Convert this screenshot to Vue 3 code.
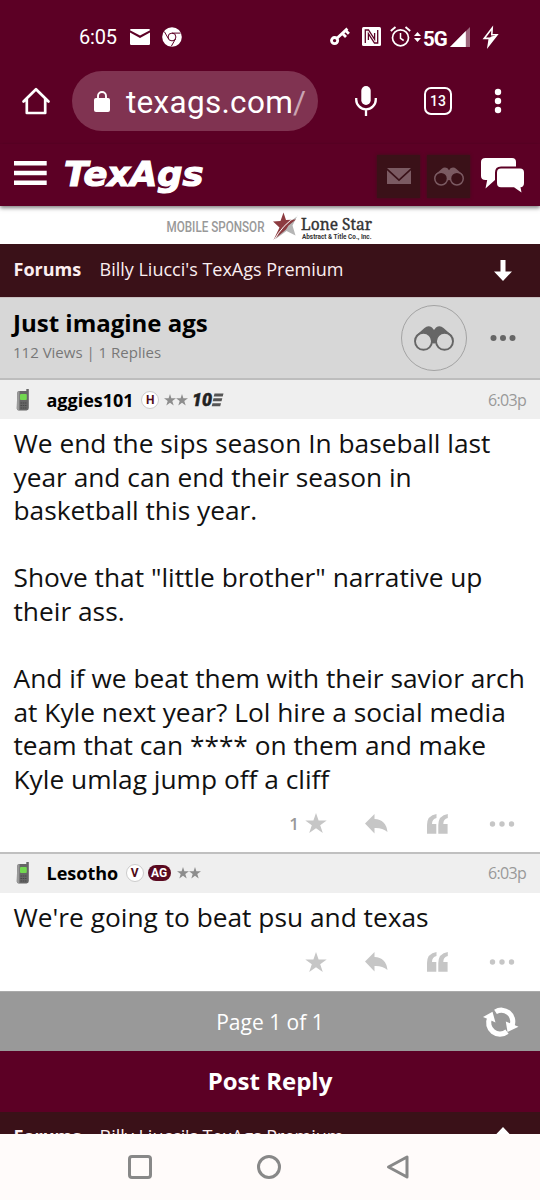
<script setup>
const posts = [
  {
    user: 'aggies101',
    badge: 'H',
    ag: false,
    ten: true,
    time: '6:03p',
    likes: '1',
    lines: [
      'We end the sips season In baseball last',
      'year and can end their season in',
      'basketball this year.',
      '',
      'Shove that "little brother" narrative up',
      'their ass.',
      '',
      'And if we beat them with their savior arch',
      'at Kyle next year? Lol hire a social media',
      'team that can **** on them and make',
      'Kyle umlag jump off a cliff',
    ],
  },
  {
    user: 'Lesotho',
    badge: 'V',
    ag: true,
    ten: false,
    time: '6:03p',
    likes: '',
    lines: ["We're going to beat psu and texas"],
  },
]
</script>

<template>
  <div class="screen">
    <div class="status">
      <span class="clock">6:05</span>
      <svg class="s-mail" viewBox="0 0 20 16" width="20" height="16"><path d="M0 1.200Q0 0 1.200 0H18.800Q20 0 20 1.200L10 6.500 0 1.200ZM0 3.600 10 9 20 3.600V14.800Q20 16 18.800 16H1.200Q0 16 0 14.800Z" fill="#fff"/></svg>
      <svg class="s-chrome" viewBox="0 0 20 20" width="20" height="20"><circle cx="10" cy="10" r="9.800" fill="#fff"/><g fill="none" stroke="#5c0025" stroke-width="1"><circle cx="10" cy="10" r="3.900"/><path d="M10 6.100H18.600M6.600 12 2.400 4.700M13.400 12 9.300 19.300"/></g></svg>
      <span class="grow"></span>
      <svg class="s-key" viewBox="0 0 20 19" width="20" height="19"><g fill="none" stroke="#fff"><circle cx="4.600" cy="13.600" r="3.100" stroke-width="2.800"/><path d="M7 11.200 17.400 1.600M12.300 6.300l3.700 3.700M15.600 3.500l3.300 3.300" stroke-width="2.800"/></g></svg>
      <svg class="s-nfc" viewBox="0 0 19 19" width="19" height="19"><rect width="19" height="19" rx="1.500" fill="#fff"/><path d="M3.300 16V3H6.500L12.600 12.400V6M15.700 3V16H12.500L6.400 6.600V13" fill="none" stroke="#5c0025" stroke-width="1.300"/></svg>
      <svg class="s-alarm" viewBox="0 0 21 21" width="21" height="21"><g fill="none" stroke="#fff"><circle cx="10.500" cy="11.800" r="8" stroke-width="1.700"/><path d="M10.500 7V12.400L13.700 14.500" stroke-width="1.500"/><path d="M.8 5 5.500 1M20.200 5 15.500 1" stroke-width="1.900"/></g></svg>
      <svg class="s-arrows" viewBox="0 0 7 10" width="7" height="10"><path d="M0 4 3.500 0 7 4ZM0 6H7L3.500 10Z" fill="#fff"/></svg>
      <span class="fiveg">5G</span>
      <svg class="s-signal" viewBox="0 0 20 20" width="20" height="20"><path d="M0 20 20 0V20Z" fill="#fff" opacity=".4"/><path d="M0 20 15.800 4V20Z" fill="#fff"/></svg>
      <svg class="s-bolt" viewBox="0 0 15 20" width="15" height="20"><path d="M9.200 1 1.200 11.400H6.400L5.200 19 14 7.800H8.800Z" fill="none" stroke="#fff" stroke-width="1.600"/><path d="M8.300 9.500 14 8 5.200 19 6.500 11Z" fill="#fff"/></svg>
    </div>

    <div class="urlbar">
      <svg class="u-home" viewBox="0 0 28 28" width="28" height="28"><path d="M1.500 14.500 14 2.200 26.500 14.500M4.800 12V26H23.200V12" fill="none" stroke="#fff" stroke-width="2.700" stroke-linejoin="round" stroke-linecap="round"/></svg>
      <div class="pill">
        <svg viewBox="0 0 16 21" width="16" height="21"><rect y="7" width="16" height="14" rx="2" fill="#fff"/><path d="M4 8V5A4 4 0 0 1 12 5V8" fill="none" stroke="#fff" stroke-width="1.900"/></svg>
        <span class="url">texags.com<i>/</i></span>
      </div>
      <svg class="u-mic" viewBox="0 0 22 30" width="22" height="30"><rect x="6.300" width="9.400" height="19" rx="4.700" fill="#fff"/><path d="M1.200 12V13.500A9.800 9.800 0 0 0 20.800 13.500V12M11 23V30" fill="none" stroke="#fff" stroke-width="2.300"/></svg>
      <div class="tabs">13</div>
      <svg class="u-dots" viewBox="0 0 8 26" width="8" height="26"><g fill="#fff"><circle cx="4" cy="4" r="3.200"/><circle cx="4" cy="13" r="3.200"/><circle cx="4" cy="22" r="3.200"/></g></svg>
    </div>

    <header class="site">
      <svg viewBox="0 0 33 24" width="33" height="24"><path d="M0 0H32.700V4.500H0ZM0 9.700H32.700V14.200H0ZM0 19.400H32.700V23.900H0Z" fill="#fff"/></svg>
      <svg class="logo" viewBox="0 0 144 44" width="144" height="44"><text x="-1" y="35" textLength="139.500" lengthAdjust="spacingAndGlyphs">TexAgs</text></svg>
      <span class="grow"></span>
      <div class="tile">
        <svg viewBox="0 0 24 16" width="24" height="16"><path d="M0 0H24L12 11ZM0 2.200 12 13.200 24 2.200V16H0Z" fill="#7b5a62"/></svg>
      </div>
      <div class="tile">
        <svg viewBox="0 0 40 25" width="30" height="19"><path d="M1.500 10 10.500 2Q14-1 18 1.500L20 4 22 1.500Q26-1 29.500 2L38.500 10 30 16 20 17.500 10 16Z" fill="#7b5a62"/><g fill="#3a1118" stroke="#7b5a62" stroke-width="2"><circle cx="9.500" cy="15.300" r="8.500"/><circle cx="30.500" cy="15.300" r="8.500"/></g></svg>
      </div>
      <svg class="chat" viewBox="0 0 43 35" width="43" height="35"><path d="M4.500 0H31Q35 0 35 4V18Q35 22 31 22H14L4.500 30.500 6.200 22H4.500Q0 22 0 18V4Q0 0 4.500 0Z" fill="#fff"/><path d="M20 10.500H39Q43 10.500 43 14.500V25Q43 29 39.500 29.300L40.500 34.500 33 29.300H20Q16 29.300 16 25V14.500Q16 10.500 20 10.500Z" fill="#fff" stroke="#5c0025" stroke-width="4" paint-order="stroke"/></svg>
    </header>

    <div class="sponsor">
      <svg viewBox="0 0 210 34" width="210" height="34">
        <text class="sp" x=".5" y="23" textLength="98" lengthAdjust="spacingAndGlyphs">MOBILE SPONSOR</text>
        <path d="M131.500 6.500 124 12.500 121 17 107.500 31.500 120.500 22 129.500 26.500 126.500 16.500Z" fill="#b5b5b5"/>
        <path d="M117.500 3.500 120 11 130 10.500 122.500 16.500 120 20.500 107.500 31 113.500 18.500 107 12.500 114.500 12Z" fill="#8c3b40"/>
        <path d="M131 7Q117 15 107.500 32" fill="none" stroke="#fff" stroke-width="1"/>
        <text class="ls" x="135" y="20.500" textLength="71" lengthAdjust="spacingAndGlyphs">Lone Star</text>
        <text class="ab" x="136" y="29.500" textLength="69.500" lengthAdjust="spacingAndGlyphs">Abstract &amp; Title Co., Inc.</text>
      </svg>
    </div>

    <nav class="crumb">
      <b>Forums</b><span>Billy Liucci's TexAgs Premium</span>
      <svg viewBox="0 0 18 21" width="18" height="21"><path d="M6.500 0H11.500V11.500H18L9 21 0 11.500H6.500Z" fill="#fff"/></svg>
    </nav>

    <section class="topic">
      <div class="heading">
        <h1>Just imagine ags</h1>
        <p>112 Views | 1 Replies</p>
      </div>
      <div class="ring">
        <svg viewBox="0 0 40 25" width="40" height="25"><path d="M1.500 10 10.500 2Q14-1 18 1.500L20 4 22 1.500Q26-1 29.500 2L38.500 10 30 16 20 17.500 10 16Z" fill="#666"/><g fill="#d7d7d7" stroke="#666" stroke-width="1.900"><circle cx="9.500" cy="15.300" r="8.500"/><circle cx="30.500" cy="15.300" r="8.500"/></g></svg>
      </div>
      <svg class="more" viewBox="0 0 26 8" width="26" height="8"><g fill="#666"><circle cx="3.500" cy="4" r="3"/><circle cx="13" cy="4" r="3"/><circle cx="22.500" cy="4" r="3"/></g></svg>
    </section>

    <article v-for="p in posts" :key="p.user" class="post">
      <div class="meta">
        <svg class="phone" viewBox="0 0 14 22" width="14" height="22"><path d="M10.300 0H12.800V19Q12.800 21 10.500 21.500H3Q.8 21.500 .8 19.500L1.200 4Q1.300 2 3.500 2H10.300Z" fill="#666"/><path d="M.8 19.500 1.200 4Q1.300 2 3.500 2L3.300 21.500Q.8 21.500 .8 19.500Z" fill="#999"/><rect x="4" y="5" width="6.800" height="6" rx="1" fill="#72d850"/><path d="M4.500 14H10.500M4.500 16.500H10.500M4.500 19H10.500" stroke="#484848" stroke-width="1.100" stroke-dasharray="1.500 .7"/></svg>
        <b class="name">{{ p.user }}</b>
        <span class="badge">{{ p.badge }}</span>
        <span v-if="p.ag" class="ag">AG</span>
        <svg class="stars" viewBox="0 0 24 12" width="24" height="12"><path d="M6 0 7.400 4.300H12L8.300 7 9.700 11.500 6 8.700 2.300 11.500 3.700 7 0 4.300H4.600ZM18 0 19.400 4.300H24L20.300 7 21.700 11.500 18 8.700 14.300 11.500 15.700 7 12 4.300H16.600Z" fill="#8d8d8d"/></svg>
        <svg v-if="p.ten" class="ten" viewBox="0 0 31 14" width="31" height="14"><text x="-1" y="13.300" textLength="20" lengthAdjust="spacingAndGlyphs">10</text><path d="M21.500.5H30.500L29.700 3.500H20.700ZM20.500 5.300H29.300L28.500 8.300H19.700ZM19.500 10.200H28L27.200 13.300H18.700Z" fill="#555"/></svg>
        <span class="grow"></span>
        <time>{{ p.time }}</time>
      </div>
      <div class="text">
        <div v-for="(l, i) in p.lines" :key="i" class="line">{{ l }}</div>
      </div>
      <div class="actions">
        <span class="likes">{{ p.likes }}</span>
        <svg class="a-star" viewBox="0 0 22 21" width="22" height="21"><path d="M11 0 13.600 7.600H21.700L15.200 12.300 17.800 20 11 15.300 4.200 20 6.800 12.300.3 7.600H8.400Z" fill="#c6c6c6"/></svg>
        <svg class="a-reply" viewBox="0 0 23 20" width="23" height="20"><path d="M0 9.500 9.500 0V5Q21 5.500 22.500 18Q17 13.500 9.500 14V19.500Z" fill="#c6c6c6"/></svg>
        <svg class="a-quote" viewBox="0 0 21 20" width="21" height="20"><path d="M9.500 0V4Q5 5 5 10H9.300V19.800H0V11Q0 1.500 9.500 0ZM20.800 0V4Q16.300 5 16.300 10H20.600V19.800H11.300V11Q11.300 1.500 20.800 0Z" fill="#c6c6c6"/></svg>
        <svg class="a-more" viewBox="0 0 26 6" width="26" height="6"><g fill="#c6c6c6"><circle cx="3.500" cy="3" r="2.700"/><circle cx="13" cy="3" r="2.700"/><circle cx="22.500" cy="3" r="2.700"/></g></svg>
      </div>
    </article>

    <div class="pager">
      <span>Page 1 of 1</span>
      <svg viewBox="0 0 36 28" width="36" height="28"><g fill="none" stroke="#fff" stroke-width="5.200"><path d="M12.500 3.900A11.300 11.300 0 0 1 29 17.500"/><path d="M24 23.600A11.300 11.300 0 0 1 6.700 10"/></g><path d="M0 9 9.500 3.800 12.500 14.500 6.500 11.800ZM35.500 18.800 24.500 24 22.800 13.500 29 16Z" fill="#fff"/></svg>
    </div>
    <div class="reply">Post Reply</div>
    <div class="clip">
      <nav class="crumb second">
        <b>Forums</b><span>Billy Liucci's TexAgs Premium</span>
        <svg viewBox="0 0 18 21" width="18" height="21"><path d="M6.500 21H11.500V9.500H18L9 0 0 9.500H6.500Z" fill="#fff"/></svg>
      </nav>
    </div>
    <div class="sysnav">
      <svg viewBox="0 0 24 24" width="24" height="24"><rect x="1.500" y="1.500" width="21" height="21" rx="2.500" fill="none" stroke="#888" stroke-width="3"/></svg>
      <svg viewBox="0 0 24 24" width="24" height="24"><circle cx="12" cy="12" r="10.500" fill="none" stroke="#888" stroke-width="3"/></svg>
      <svg viewBox="0 0 24 24" width="24" height="24"><path d="M2.500 12 21 2V22Z" fill="none" stroke="#888" stroke-width="3" stroke-linejoin="round"/></svg>
    </div>
  </div>
</template>

<style>
body { margin: 0; }
</style>

<style scoped>
.screen { width: 540px; height: 1200px; overflow: hidden; background: #fff; font-family: "Open Sans", "Noto Sans", sans-serif; display: flex; flex-direction: column; }
.screen > * { flex: none; box-sizing: border-box; }
svg { display: block; flex: none; overflow: visible; }
.grow { flex: 1; }
.status { height: 71px; padding: 2px 42px 0 79px; background: #5c0025; display: flex; align-items: center; }
.clock { font: 400 20px Roboto, sans-serif; color: #fff; width: 51px; letter-spacing: -0.200px; }
.s-chrome { margin-left: 12px; }
.s-nfc { margin-left: 12px; }
.s-alarm { margin-left: 9px; }
.s-arrows { margin: 0 2px 0 3px; }
.fiveg { font: 700 20.500px Roboto, sans-serif; color: #fff; width: 26px; letter-spacing: -1px; padding-top: 5px; }
.s-signal { margin-left: 1px; }
.s-bolt { margin-left: 13px; }
.urlbar { height: 73px; padding: 0 38px 13px 22px; background: #5c0025; display: flex; align-items: center; }
.pill { width: 246px; height: 60px; margin-left: 22px; box-sizing: border-box; border-radius: 30px; background: #803351; display: flex; align-items: center; padding-left: 22px; }
.url { margin-left: 16px; padding-top: 2px; font: 400 31.500px Roboto, sans-serif; letter-spacing: 0.300px; color: #fff; white-space: nowrap; }
.url i { font-style: normal; color: #c9a3b2; }
.u-mic { margin-left: 37px; }
.tabs { width: 28px; height: 28px; box-sizing: border-box; margin-left: 47px; border: 2.500px solid #fff; border-radius: 7px; color: #fff; font: 500 14px/24px Roboto, sans-serif; text-align: center; }
.u-dots { margin-left: 42px; }
.site { height: 62px; background: #5c0025; display: flex; align-items: center; padding: 0 16px 4px 14px; box-shadow: 0 2px 4px rgba(0, 0, 0, .5); position: relative; }
.logo { margin: 0 0 0 18px; }
.logo text { font: italic 900 33px "DejaVu Sans", sans-serif; fill: #fff; stroke: #fff; stroke-width: 1.200px; }
.tile { width: 43px; height: 43px; margin: 6px 7px 0 0; background: #3a1118; box-shadow: 0 0 3px #3a1118; display: flex; align-items: center; justify-content: center; }
.chat { margin: 4px 0 0 4px; }
.sponsor { height: 38px; padding: 3px 0 0 166px; background: #fff; }
.sp { font: 500 15px Roboto, sans-serif; fill: #999; }
.ls { font: 400 17px "Noto Serif", "Liberation Serif", serif; fill: #333; stroke: #333; stroke-width: .4px; }
.ab { font: 700 7px Roboto, sans-serif; fill: #333; }
.crumb { height: 53px; background: #3a1118; display: flex; align-items: center; padding: 0 28px 4px 13.500px; color: #fbeef0; font-size: 18px; box-sizing: border-box; }
.crumb.second { padding-bottom: 6px; }
.crumb b { width: 86px; font-size: 18px; }
.crumb svg { margin-left: auto; margin-top: 4px; }
.topic { height: 83px; background: #d7d7d7; border-top: 1px solid #c9c0c0; border-bottom: 2px solid #bdbdbd; display: flex; align-items: center; padding-right: 24px; }
.heading { flex: 1; padding-left: 13px; }
h1 { margin: 0; font-size: 24px; line-height: 33px; font-weight: 700; color: #000; }
p { margin: 0 0 6px; font-size: 15px; line-height: 26px; color: #777; }
.ring { width: 66px; height: 66px; box-sizing: border-box; border: 1.500px solid #a3a3a3; border-radius: 50%; display: flex; align-items: center; justify-content: center; }
.more { margin-left: 23px; }
.post { background: #fff; }
.post + .post { border-top: 2px solid #c0c0c0; padding-bottom: 1px; }
.meta { height: 39px; background: #efefef; display: flex; align-items: center; padding: 0 14px 0 16px; box-sizing: border-box; }
.name { margin-left: 16.500px; font-size: 18px; color: #000; }
.badge { width: 18px; height: 18px; box-sizing: border-box; margin-left: 7.500px; border: 1px solid #ccc; border-radius: 50%; background: #fff; color: #500b18; font: 700 12px/16px Roboto, sans-serif; text-align: center; }
.ag { width: 23px; height: 16px; margin-left: 4px; border-radius: 8px; background: #5a0a20; color: #fff; font: 700 12px/16px Roboto, sans-serif; text-align: center; }
.stars { margin-left: 4.500px; }
.ag + .stars { margin-left: 6.500px; }
.ten { margin-left: 5px; }
.ten text { font: italic 900 18px Roboto, sans-serif; fill: #222; stroke: #222; stroke-width: .5px; }
time { font-size: 16px; letter-spacing: -0.700px; color: #999; }
.text { padding: 8px 0 0 13.500px; }
.line { height: 33.600px; line-height: 33.600px; font-size: 26.300px; color: #111; white-space: nowrap; }
.actions { height: 55px; display: flex; align-items: center; padding: 0 25px 1px 0; box-sizing: border-box; }
.post + .post .actions { height: 56px; padding-bottom: 0; }
.likes { width: 299px; text-align: right; font-size: 17px; font-weight: 600; color: #999; }
.a-star { margin-left: 6px; }
.a-reply { margin-left: 38px; }
.a-quote { margin-left: 39px; }
.a-more { margin-left: 41px; }
.pager { height: 60px; background: #999; border-top: 1px solid #aaa; color: #fff; font-size: 21px; display: flex; align-items: center; justify-content: center; position: relative; }
.pager svg { position: absolute; right: 21px; top: 16px; }
.reply { height: 61px; background: #5c0025; color: #fff; font-size: 24px; font-weight: 700; line-height: 60px; text-align: center; }
.clip { height: 22px; overflow: hidden; }
.sysnav { height: 66px; margin-top: auto; background: #fffbfa; display: flex; align-items: center; padding-left: 128px; gap: 105px; }
</style>
